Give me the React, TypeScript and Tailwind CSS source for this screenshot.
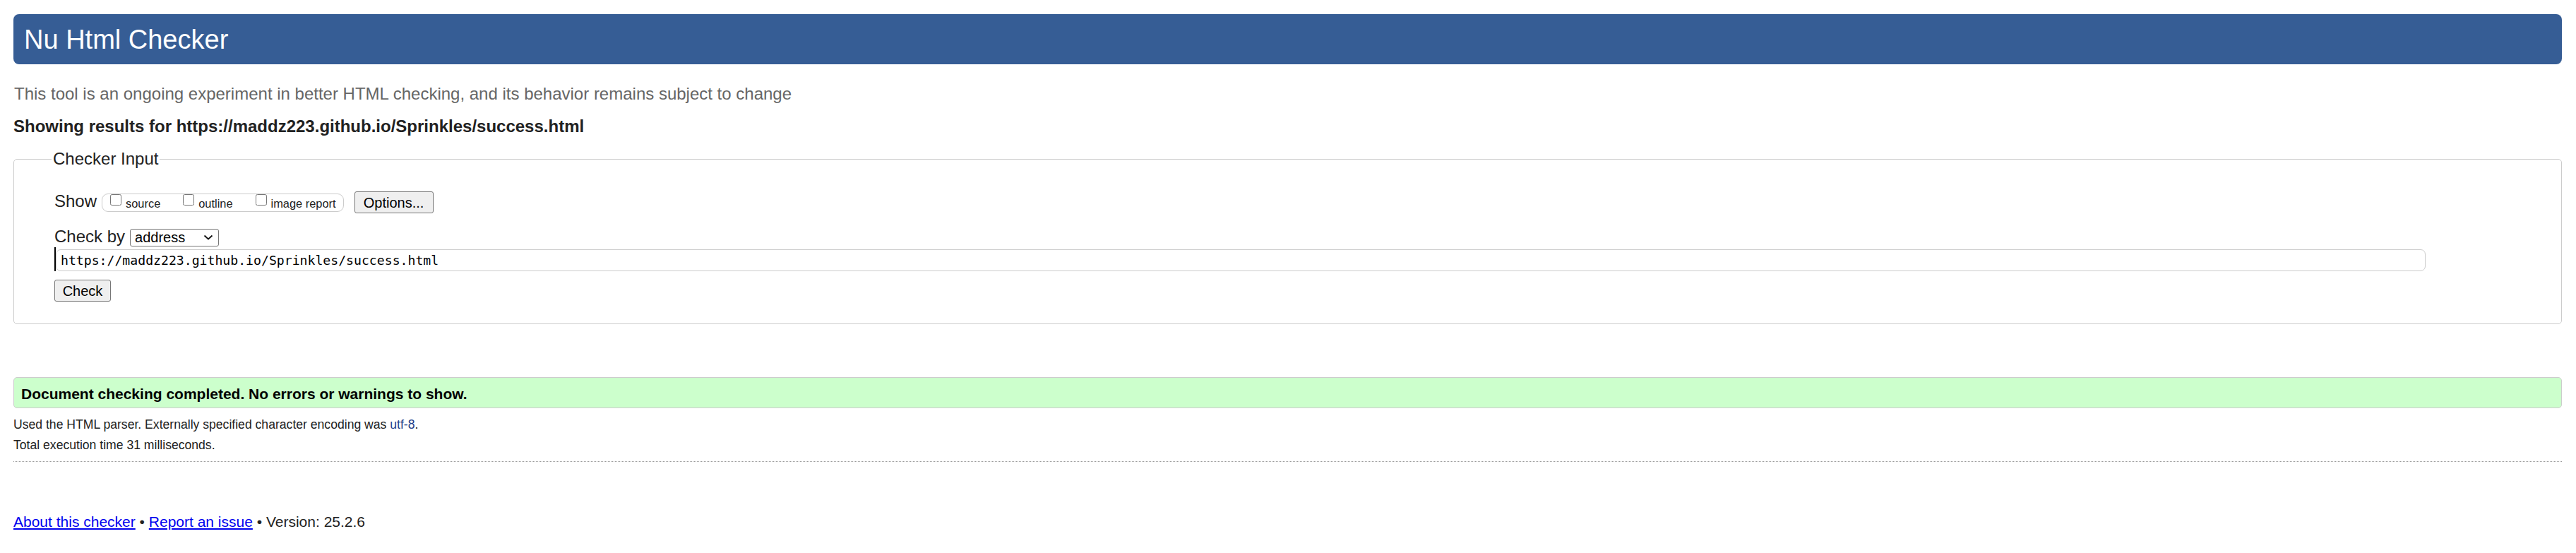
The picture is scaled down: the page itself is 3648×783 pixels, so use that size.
export default function App() {
  const options = ["source", "outline", "image report"];

  return (
    <div className="min-h-[783px] bg-white pl-[19px] pr-[20px] pb-[32px] font-['Liberation_Sans',Arial,sans-serif] text-[#222]">
      {/* Title bar */}
      <h1 className="mt-[20px] flex h-[71px] items-center rounded-[8px] bg-[#365d95] pl-[15px] text-[38px] font-normal leading-none text-white">
        Nu Html Checker
      </h1>

      <p className="mt-[28px] pl-px text-[24px] leading-[28px] text-[#666]">
        This tool is an ongoing experiment in better HTML checking, and its behavior remains subject to change
      </p>
      <p className="mt-[18px] text-[24px] font-bold leading-[28px]">
        Showing results for https://maddz223.github.io/Sprinkles/success.html
      </p>

      {/* Checker input form */}
      <fieldset className="mt-[18px] rounded-[5px] border border-[#ccc] pt-[32px] pb-[31px] pl-[57px]">
        <legend className="-ml-[4px] px-[2px] text-[24px] leading-[28px]">Checker Input</legend>

        <div className="flex h-[31px] items-center">
          <span className="pb-[4px] text-[24px] leading-[28px]">Show</span>
          <div className="ml-[7px] flex h-[26px] items-start gap-[32px] rounded-[9px] border border-[#ccc] pl-[11px] pr-[10px]">
            {options.map((o) => (
              <label key={o} className="flex items-start gap-[6px]">
                <input type="checkbox" className="m-0 h-4 w-4" />
                <span className="mt-px text-[16.4px] leading-[24px]">{o}</span>
              </label>
            ))}
          </div>
          <button className="ml-[15px] h-[31px] w-[112px] rounded-[3px] border border-[#767676] bg-[#efefef] text-[20px] text-black">
            Options...
          </button>
        </div>

        <div className="mt-[20px] flex h-[28px] items-center gap-[7px]">
          <span className="pb-[3px] text-[24px] leading-[28px]">Check by</span>
          <div className="flex h-[25px] w-[126px] items-center justify-between rounded-[3px] border border-[#767676] bg-white pl-[6px] pr-[7px] text-[20px] text-black">
            <span>address</span>
            <svg width="14" height="8" viewBox="0 0 14 8" fill="none">
              <polyline points="1.5,1.5 7,6.5 12.5,1.5" stroke="#111" strokeWidth="1.8" />
            </svg>
          </div>
        </div>

        <div className="flex h-[34px] items-end">
          <div className="h-[34px] w-[2px] bg-black" />
          <div className="flex h-[31px] w-[3356px] items-center rounded-[7px] border border-[#ccc] pl-[6px] font-['DejaVu_Sans_Mono',monospace] text-[18.15px] text-black">
            https://maddz223.github.io/Sprinkles/success.html
          </div>
        </div>

        <button className="mt-[12px] block h-[31px] w-[80px] rounded-[3px] border border-[#767676] bg-[#efefef] text-[20px] text-black">
          Check
        </button>
      </fieldset>

      {/* Result */}
      <div className="mt-[75px] flex h-[44px] items-center rounded-[5px] border border-[#ccc] bg-[#ccffcc] pt-[3px] pl-[10px] text-[21px] font-bold text-black">
        Document checking completed. No errors or warnings to show.
      </div>
      <p className="mt-[13px] text-[17.6px] leading-[20px]">
        Used the HTML parser. Externally specified character encoding was <span className="text-[#22418a]">utf-8</span>.
      </p>
      <p className="mt-[9px] text-[17.6px] leading-[20px]">Total execution time 31 milliseconds.</p>
      <hr className="mt-[13px] border-t border-dotted border-[#999]" />

      <p className="mt-[73px] text-[21px] leading-[24px]">
        <a href="#" className="text-[#0000ee] underline">About this checker</a> •{" "}
        <a href="#" className="text-[#0000ee] underline">Report an issue</a> • Version: 25.2.6
      </p>
    </div>
  );
}
